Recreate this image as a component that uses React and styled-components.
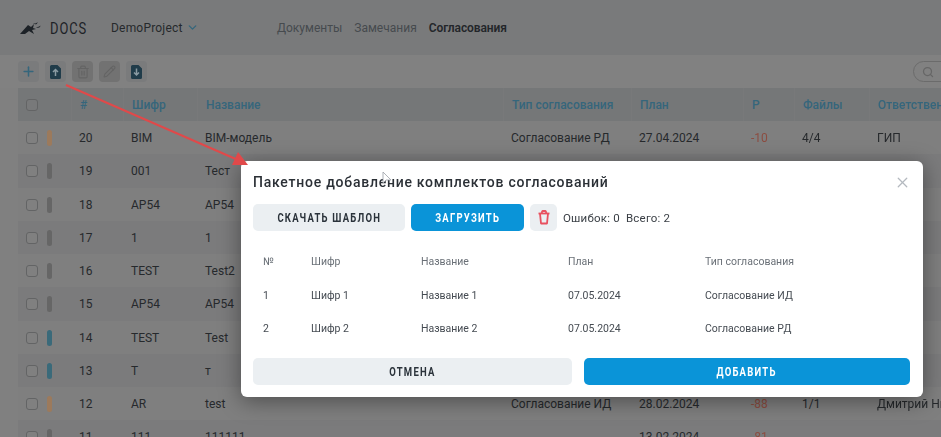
import React from "react";
import styled, { createGlobalStyle } from "styled-components";
import { ChevronDown, Plus, Search, Trash2, Pencil, X } from "lucide-react";

const GlobalStyle = createGlobalStyle`
  html, body {
    margin: 0;
    padding: 0;
    background: #7f7f7f;
  }
  * {
    box-sizing: border-box;
  }
`;

const Page = styled.div`
  position: relative;
  width: 941px;
  height: 437px;
  overflow: hidden;
  font-family: "Roboto", "Liberation Sans", sans-serif;
  background: #808080;
  color: #26292c;
`;

const Backdrop = styled.div`
  filter: blur(0.4px);
`;

const Header = styled.header`
  height: 55px;
  background: #797a7b;
  display: flex;
  align-items: center;
  padding-left: 20px;
`;

const Logo = styled.div`
  display: flex;
  align-items: center;
  gap: 9px;
  width: 91px;
`;

const LogoText = styled.span`
  display: inline-block;
  font-size: 17px;
  font-weight: 400;
  letter-spacing: 1.2px;
  color: #1d2227;
  transform: scaleX(0.76);
  transform-origin: left center;
`;

const ProjectSelect = styled.div`
  display: flex;
  align-items: center;
  gap: 3px;
  width: 166px;
  font-size: 12px;
  letter-spacing: 0.2px;
  color: #26292c;
  svg {
    color: #35667c;
  }
`;

const Nav = styled.nav`
  display: flex;
  gap: 12px;
  font-size: 12px;
`;

const NavItem = styled.span`
  color: ${(p) => (p.$active ? "#23262a" : "#464a4e")};
  font-weight: ${(p) => (p.$active ? 600 : 400)};
  letter-spacing: ${(p) => (p.$active ? "-0.1px" : "0")};
`;

const Toolbar = styled.div`
  height: 33px;
  padding: 6px 0 0 18px;
  display: flex;
  gap: 6px;
  background: #818181;
`;

const ToolButton = styled.div`
  width: 21px;
  height: 21px;
  border-radius: 4px;
  display: flex;
  align-items: center;
  justify-content: center;
  background: ${(p) => (p.$disabled ? "#727272" : "#7a7b7c")};
  color: ${(p) => (p.$disabled ? "#646464" : "#35667c")};
`;

const SearchBox = styled.div`
  margin-left: auto;
  margin-right: -30px;
  width: 58px;
  height: 21px;
  border: 1px solid #6b6b6b;
  border-radius: 11px;
  padding-left: 8px;
  display: flex;
  align-items: center;
  color: #666;
`;

const Row = styled.div`
  display: grid;
  grid-template-columns: 53px 52px 74px 306px 128px 112px 51px 75px 120px;
  align-items: center;
  width: 971px;
  margin-left: 18px;
  height: ${(p) => (p.$head ? "33px" : "33.25px")};
  padding-top: ${(p) => (p.$head ? "0" : "1px")};
  font-size: 12px;
  white-space: nowrap;
  background: ${(p) =>
    p.$head ? "#757778" : p.$odd ? "#7b7b7c" : "#7f7f7f"};
  color: ${(p) => (p.$head ? "#35667c" : "#26292c")};
`;

const Cell = styled.div`
  padding-left: 8px;
  height: 100%;
  display: flex;
  align-items: center;
  overflow: hidden;
  color: ${(p) => (p.$danger ? "#8c4c40" : "inherit")};
  font-weight: ${(p) => (p.$head ? 500 : 400)};
  border-left: ${(p) => (p.$head ? "1px solid #78797a" : "none")};
`;

const SelectCell = styled.div`
  padding-left: 8px;
  display: flex;
  align-items: center;
  gap: 9px;
`;

const Check = styled.span`
  width: 12px;
  height: 12px;
  border: 1px solid #636465;
  border-radius: 3px;
  background: ${(p) => (p.$head ? "#78797a" : "#808080")};
`;

const StatusBar = styled.span`
  width: 5px;
  height: 16px;
  border-radius: 3px;
  background: ${(p) => p.$color};
`;

const Modal = styled.div`
  position: absolute;
  left: 241px;
  top: 161px;
  width: 682px;
  height: 236px;
  background: #fff;
  border-radius: 6px;
  padding: 12px 13px 12px 12px;
  box-shadow: 0 4px 22px rgba(0, 0, 0, 0.4);
  display: flex;
  flex-direction: column;
`;

const TitleRow = styled.div`
  display: flex;
  justify-content: space-between;
  align-items: center;
  height: 18px;
`;

const Title = styled.h2`
  margin: 0;
  font-size: 14px;
  font-weight: 500;
  letter-spacing: 0.75px;
  color: #2b3036;
`;

const CloseButton = styled.div`
  color: #b4b9bf;
  display: flex;
  margin-right: -1px;
`;

const Actions = styled.div`
  display: flex;
  align-items: center;
  gap: 6px;
  margin-top: 13px;
`;

const Button = styled.div`
  height: 27px;
  width: ${(p) => p.$width || "auto"};
  flex: ${(p) => p.$flex || "none"};
  border-radius: 5px;
  display: flex;
  align-items: center;
  justify-content: center;
  background: ${(p) => (p.$primary ? "#0a94d8" : "#ebeff2")};
  color: ${(p) => (p.$primary ? "#fff" : "#2b333b")};
`;

const ButtonLabel = styled.span`
  display: inline-block;
  font-size: 12.5px;
  font-weight: 700;
  letter-spacing: 1.6px;
  white-space: nowrap;
  transform: scaleX(0.76);
`;

const IconButton = styled(Button)`
  width: 27px;
  color: #e8505f;
`;

const Summary = styled.span`
  font-size: 11.5px;
  letter-spacing: 0.2px;
  color: #3a3f45;
`;

const Table = styled.div`
  margin-top: 14px;
`;

const TableRow = styled.div`
  display: grid;
  grid-template-columns: 48px 110px 147px 137px 1fr;
  align-items: center;
  height: 33.5px;
  padding-left: 10px;
  font-size: 10.5px;
  color: ${(p) => (p.$head ? "#6a7077" : "#454b52")};
`;

const Footer = styled.div`
  display: flex;
  gap: 12px;
  margin-top: auto;
`;

const Overlay = styled.svg`
  position: absolute;
  left: 0;
  top: 0;
  pointer-events: none;
`;

const rows = [
  { n: 20, code: "BIM", name: "BIM-модель", color: "#9c7a5c", type: "Согласование РД", plan: "27.04.2024", p: "-10", files: "4/4", owner: "ГИП" },
  { n: 19, code: "001", name: "Тест", color: "#666" },
  { n: 18, code: "АР54", name: "АР54", color: "#666" },
  { n: 17, code: "1", name: "1", color: "#666" },
  { n: 16, code: "TEST", name: "Test2", color: "#666" },
  { n: 15, code: "АР54", name: "АР54", color: "#666" },
  { n: 14, code: "TEST", name: "Test", color: "#3a6a7a" },
  { n: 13, code: "T", name: "т", color: "#3a6a7a" },
  { n: 12, code: "AR", name: "test", color: "#9c7a5c", type: "Согласование ИД", plan: "28.02.2024", p: "-88", files: "1/1", owner: "Дмитрий Никитин" },
  { n: 11, code: "111", name: "111111", color: "#666", plan: "13.02.2024", p: "-81" },
];

const LogoMark = () => (
  <svg width="21" height="12" viewBox="0 0 21 12" fill="#1d2227">
    <path d="M0 12 L8 3 L11 5 L14 2 L13 6 L16 7 L12 8 L14 12 L9 9 L5 12 Z" />
    <path d="M13 1.500 C15 1.800 16.500 1.200 17.500 0 C17.500 2 15.500 3.200 13 1.500 Z" />
    <path d="M16 5 C18 5 19.500 4.500 20.500 3.500 L20 5 C19 6 17 6 16 5 Z" />
  </svg>
);

const FileIcon = ({ down }) => (
  <svg width="11" height="14" viewBox="0 0 11 14">
    <path d="M1.500 0 H7.500 L11 3.500 V12.500 A1.500 1.500 0 0 1 9.500 14 H1.500 A1.500 1.500 0 0 1 0 12.500 V1.500 A1.500 1.500 0 0 1 1.500 0 Z" fill="#203c4a" />
    <path
      d={down ? "M5.500 3.500 V10 M3 7.500 L5.500 10 L8 7.500" : "M5.500 11 V4.500 M3 7 L5.500 4.500 L8 7"}
      stroke="#8a9ba3"
      strokeWidth="1.500"
      fill="none"
    />
  </svg>
);

const BinIcon = () => (
  <svg width="14" height="15" viewBox="0 0 14 15" fill="none" stroke="#e8505f" strokeWidth="1.800" strokeLinejoin="round">
    <path d="M1.500 3.500 H12.500" />
    <path d="M3 3.500 L4 13.500 H10 L11 3.500" />
    <path d="M4.500 3 L5.500 1 H8.500 L9.500 3" />
  </svg>
);

export default function App() {
  return (
    <Page>
      <GlobalStyle />
      <Backdrop>
        <Header>
          <Logo>
            <LogoMark />
            <LogoText>DOCS</LogoText>
          </Logo>
          <ProjectSelect>
            DemoProject
            <ChevronDown size={13} strokeWidth={2.5} />
          </ProjectSelect>
          <Nav>
            <NavItem>Документы</NavItem>
            <NavItem>Замечания</NavItem>
            <NavItem $active>Согласования</NavItem>
          </Nav>
        </Header>
        <Toolbar>
          <ToolButton>
            <Plus size={15} strokeWidth={2.5} />
          </ToolButton>
          <ToolButton>
            <FileIcon />
          </ToolButton>
          <ToolButton $disabled>
            <Trash2 size={14} />
          </ToolButton>
          <ToolButton $disabled>
            <Pencil size={13} />
          </ToolButton>
          <ToolButton>
            <FileIcon down />
          </ToolButton>
          <SearchBox>
            <Search size={12} strokeWidth={2.5} />
          </SearchBox>
        </Toolbar>
        <Row $head>
          <SelectCell>
            <Check $head />
          </SelectCell>
          <Cell $head>#</Cell>
          <Cell $head>Шифр</Cell>
          <Cell $head>Название</Cell>
          <Cell $head>Тип согласования</Cell>
          <Cell $head>План</Cell>
          <Cell $head>Р</Cell>
          <Cell $head>Файлы</Cell>
          <Cell $head>Ответственный</Cell>
        </Row>
        {rows.map((row, i) => (
          <Row key={row.n} $odd={i % 2 === 1}>
            <SelectCell>
              <Check />
              <StatusBar $color={row.color} />
            </SelectCell>
            <Cell>{row.n}</Cell>
            <Cell>{row.code}</Cell>
            <Cell>{row.name}</Cell>
            <Cell>{row.type}</Cell>
            <Cell>{row.plan}</Cell>
            <Cell $danger>{row.p}</Cell>
            <Cell>{row.files}</Cell>
            <Cell>{row.owner}</Cell>
          </Row>
        ))}
      </Backdrop>

      <Modal>
        <TitleRow>
          <Title>Пакетное добавление комплектов согласований</Title>
          <CloseButton>
            <X size={17} strokeWidth={1.8} />
          </CloseButton>
        </TitleRow>
        <Actions>
          <Button $width="152px">
            <ButtonLabel>СКАЧАТЬ ШАБЛОН</ButtonLabel>
          </Button>
          <Button $width="113px" $primary>
            <ButtonLabel>ЗАГРУЗИТЬ</ButtonLabel>
          </Button>
          <IconButton>
            <BinIcon />
          </IconButton>
          <Summary>Ошибок: 0&nbsp; Всего: 2</Summary>
        </Actions>
        <Table>
          <TableRow $head>
            <span>№</span>
            <span>Шифр</span>
            <span>Название</span>
            <span>План</span>
            <span>Тип согласования</span>
          </TableRow>
          <TableRow>
            <span>1</span>
            <span>Шифр 1</span>
            <span>Название 1</span>
            <span>07.05.2024</span>
            <span>Согласование ИД</span>
          </TableRow>
          <TableRow>
            <span>2</span>
            <span>Шифр 2</span>
            <span>Название 2</span>
            <span>07.05.2024</span>
            <span>Согласование РД</span>
          </TableRow>
        </Table>
        <Footer>
          <Button $flex="0 0 319px">
            <ButtonLabel>ОТМЕНА</ButtonLabel>
          </Button>
          <Button $flex="1" $primary>
            <ButtonLabel>ДОБАВИТЬ</ButtonLabel>
          </Button>
        </Footer>
      </Modal>

      <Overlay width="941" height="437" viewBox="0 0 941 437">
        <line x1="66" y1="85" x2="238" y2="160" stroke="#e0494a" strokeWidth="2" />
        <path d="M248 165 L232 165 L238 152 Z" fill="#e0494a" />
        <path d="M383 172 L383 183 L386 180 L391 180 Z" fill="#fff" stroke="#9aa0a6" strokeWidth="0.8" />
      </Overlay>
    </Page>
  );
}
